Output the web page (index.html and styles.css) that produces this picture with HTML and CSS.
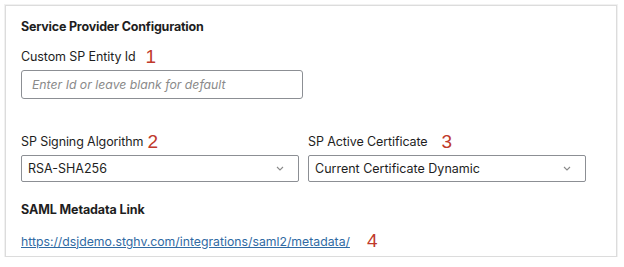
FILE: index.html
```html
<!DOCTYPE html>
<html>
<head>
<meta charset="utf-8">
<link rel="stylesheet" href="styles.css">
</head>
<body>
<div class="card">
  <h3 class="title">Service Provider Configuration</h3>
  <div class="field">
    <label class="label">Custom SP Entity Id <span class="num n1">1</span></label>
    <div class="input"><span class="placeholder">Enter Id or leave blank for default</span></div>
  </div>
  <div class="row">
    <div class="field col">
      <label class="label">SP Signing Algorithm <span class="num n2">2</span></label>
      <div class="select"><span>RSA-SHA256</span><svg class="chev" width="8" height="5" viewBox="0 0 8 5"><path d="M1 1 L4 4 L7 1" fill="none" stroke="#8a8a8a" stroke-width="1.1"/></svg></div>
    </div>
    <div class="field col">
      <label class="label">SP Active Certificate <span class="num n3">3</span></label>
      <div class="select"><span>Current Certificate Dynamic</span><svg class="chev" width="8" height="5" viewBox="0 0 8 5"><path d="M1 1 L4 4 L7 1" fill="none" stroke="#8a8a8a" stroke-width="1.1"/></svg></div>
    </div>
  </div>
  <h3 class="subtitle">SAML Metadata Link</h3>
  <div class="linkrow">
    <a class="link" href="#">https://dsjdemo.stghv.com/integrations/saml2/metadata/</a>
    <span class="num n4">4</span>
  </div>
</div>
</body>
</html>
```
FILE: styles.css
```css
* { box-sizing: border-box; }
html, body { margin: 0; padding: 0; background: #fff; }
body {
  font-family: Inter, "Noto Sans", sans-serif;
  color: #1e1e1e;
  padding: 5px 0 0 5px;
}
.card {
  width: 612px;
  height: 252px;
  border: 1px solid #dcdcdc;
  box-shadow: 0 0 0 1px #f1f1f1;
  padding: 12px 15px 0 15px;
}
.title {
  margin: 0;
  font-size: 12.5px;
  font-weight: 700;
  line-height: 18px;
  letter-spacing: -0.2px;
}
.field { display: flex; flex-direction: column; }
.label {
  font-size: 12.5px;
  line-height: 18px;
  margin-top: 11px;
  height: 20px;
  display: flex;
  align-items: center;
  letter-spacing: -0.1px;
}
.num {
  color: #c0392b;
  font-family: "Liberation Sans", sans-serif;
  font-size: 19px;
  line-height: 18px;
  margin-left: 10px;
}
.n2 { margin-left: 4px; }
.n3 { margin-left: 14px; }
.input {
  margin-top: 3px;
  width: 282px;
  height: 29px;
  border: 1px solid #8c8f94;
  border-radius: 3px;
  display: flex;
  align-items: center;
  padding-left: 10px;
}
.placeholder {
  font-style: italic;
  color: #8a8a8a;
  font-size: 12.25px;
}
.row {
  display: flex;
  gap: 9px;
  margin-top: 33px;
}
.row .label { margin-top: 0; }
.col { width: 278px; }
.select {
  margin-top: 3px;
  height: 27px;
  border: 1px solid #8c8f94;
  border-radius: 2px;
  display: flex;
  align-items: center;
  justify-content: space-between;
  padding: 0 14px 0 6px;
  font-size: 12.5px;
}
.subtitle {
  margin: 19px 0 0 0;
  font-size: 12.5px;
  font-weight: 700;
  line-height: 18px;
  letter-spacing: -0.1px;
}
.linkrow {
  margin-top: 12px;
  display: flex;
  align-items: center;
  height: 20px;
}
.link {
  color: #2f6aa3;
  font-size: 12.25px;
  text-decoration: underline;
}
.n4 { margin-left: 17px; }
```
